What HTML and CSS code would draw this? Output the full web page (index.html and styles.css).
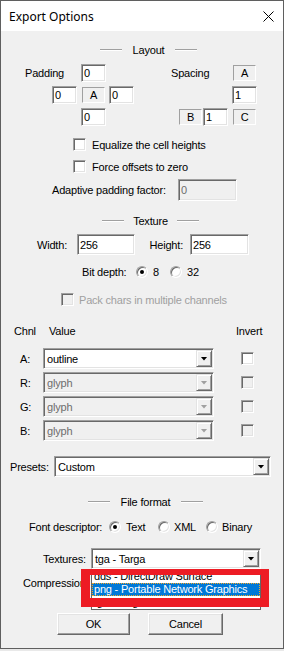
FILE: index.html
```html
<!DOCTYPE html>
<html lang="en">
<head>
    <meta charset="UTF-8">
    <title>Export Options</title>
    <link rel="stylesheet" href="styles.css">
</head>
<body>
    <div class="window">
        <div class="titlebar">
            <span class="title">Export Options</span>
            <svg class="close" width="11" height="11" viewBox="0 0 11 11">
                <path d="M0.5 0.5 L10.5 10.5 M10.5 0.5 L0.5 10.5" stroke="#000" stroke-width="1" fill="none"/>
            </svg>
        </div>
        <div class="client">
            <!-- Layout -->
            <div class="hdr hdr-layout">
                <span class="etch"></span><span class="hdr-text w53">Layout</span><span class="etch"></span>
            </div>
            <div class="layout-grid">
                <div class="pad">
                    <div class="grow"><span class="pad-lbl">Padding</span><span class="edit">0</span></div>
                    <div class="grow pad-r2"><span class="edit">0</span><span class="tag tag-a">A</span><span class="edit">0</span></div>
                    <div class="grow pad-r3"><span class="edit">0</span></div>
                </div>
                <div class="spc">
                    <div class="grow"><span class="spc-lbl">Spacing</span><span class="tag">A</span></div>
                    <div class="grow spc-r2"><span class="edit">1</span></div>
                    <div class="grow spc-r3"><span class="tag">B</span><span class="edit spc-mid">1</span><span class="tag spc-c">C</span></div>
                </div>
            </div>
            <div class="row cb-row cb1"><span class="cb"></span><span class="cb-text">Equalize the cell heights</span></div>
            <div class="row cb-row cb2"><span class="cb"></span><span class="cb-text">Force offsets to zero</span></div>
            <div class="row adaptive"><span class="adapt-lbl">Adaptive padding factor:</span><span class="edit dis adapt-edit">0</span></div>

            <!-- Texture -->
            <div class="hdr hdr-texture">
                <span class="etch"></span><span class="hdr-text w53">Texture</span><span class="etch"></span>
            </div>
            <div class="row wh">
                <span class="wh-lbl w-lbl">Width:</span><span class="edit w-edit">256</span>
                <span class="wh-lbl h-lbl">Height:</span><span class="edit h-edit">256</span>
            </div>
            <div class="row bitdepth">
                <span class="bd-lbl">Bit depth:</span>
                <span class="rb on"></span><span class="rb-text bd8">8</span>
                <span class="rb"></span><span class="rb-text">32</span>
            </div>
            <div class="row pack"><span class="cb dis"></span><span class="pack-text">Pack chars in multiple channels</span></div>

            <div class="row colhdr"><span class="ch-chnl">Chnl</span><span class="ch-value">Value</span><span>Invert</span></div>
            <div class="row chan chan-a">
                <span class="chan-lbl">A:</span>
                <div class="combo chan-combo"><span class="val">outline</span><span class="btn"><span class="arrow"></span></span></div>
                <span class="cb chan-cb"></span>
            </div>
            <div class="row chan">
                <span class="chan-lbl">R:</span>
                <div class="combo chan-combo dis"><span class="val">glyph</span><span class="btn"><span class="arrow"></span></span></div>
                <span class="cb dis chan-cb"></span>
            </div>
            <div class="row chan">
                <span class="chan-lbl">G:</span>
                <div class="combo chan-combo dis"><span class="val">glyph</span><span class="btn"><span class="arrow"></span></span></div>
                <span class="cb dis chan-cb"></span>
            </div>
            <div class="row chan">
                <span class="chan-lbl">B:</span>
                <div class="combo chan-combo dis"><span class="val">glyph</span><span class="btn"><span class="arrow"></span></span></div>
                <span class="cb dis chan-cb"></span>
            </div>
            <div class="row presets">
                <span class="presets-lbl">Presets:</span>
                <div class="combo presets-combo"><span class="val">Custom</span><span class="btn"><span class="arrow"></span></span></div>
            </div>

            <!-- File format -->
            <div class="hdr hdr-file">
                <span class="etch"></span><span class="hdr-text w71">File format</span><span class="etch"></span>
            </div>
            <div class="row fontdesc">
                <span class="fd-lbl">Font descriptor:</span>
                <span class="rb on"></span><span class="rb-text fd-text">Text</span>
                <span class="rb"></span><span class="rb-text fd-xml">XML</span>
                <span class="rb"></span><span class="rb-text fd-bin">Binary</span>
            </div>
            <div class="row textures">
                <span class="tex-lbl">Textures:</span>
                <div class="combo tex-combo"><span class="val">tga - Targa</span><span class="btn"><span class="arrow"></span></span></div>
                <!-- open dropdown list and the red marker drawn over it -->
                <div class="droplist">
                    <div class="item">dds - DirectDraw Surface</div>
                    <div class="item sel">png - Portable Network Graphics</div>
                    <div class="item">tga - Targa</div>
                </div>
                <div class="marker"></div>
            </div>
            <div class="row compression"><span>Compression:</span></div>
            <div class="row buttons">
                <span class="button ok">OK</span>
                <span class="button cancel">Cancel</span>
            </div>
        </div>
    </div>
</body>
</html>
```

FILE: styles.css
```css
body {
    margin: 0;
    background: #e9e9e9;
    font-family: "Liberation Sans", Arial, sans-serif;
    font-size: 11px;
    color: #000;
}
.window {
    width: 284px;
    height: 649px;
    box-sizing: border-box;
    border: 1px solid #5f5f5f;
    display: flex;
    flex-direction: column;
}
.titlebar {
    height: 30px;
    background: #ffffff;
    display: flex;
    align-items: center;
    justify-content: space-between;
    flex-shrink: 0;
}
.title {
    font-family: "Noto Sans", sans-serif;
    font-size: 12px;
    margin-left: 8px;
    margin-top: 1px;
}
.close {
    margin-right: 9px;
}
.client {
    flex: 1;
    background: #f0f0f0;
    position: relative;
    letter-spacing: -0.2px;
}

/* rows */
.row {
    display: flex;
    align-items: center;
}

/* group headers */
.hdr {
    display: flex;
    align-items: center;
    height: 15px;
}
.hdr-layout { margin-top: 11px; margin-left: 99px; }
.hdr-texture { margin-top: 12px; margin-left: 101px; }
.hdr-file { margin-top: 17px; margin-left: 87px; }
.etch {
    width: 22px;
    height: 2px;
    box-sizing: border-box;
    border-top: 1px solid #a0a0a0;
    border-bottom: 1px solid #ffffff;
}
.hdr-text { text-align: center; }
.w53 { width: 53px; }
.w71 { width: 71px; }

/* controls */
.edit {
    box-sizing: border-box;
    width: 25px;
    height: 18px;
    display: flex;
    align-items: center;
    padding-left: 2px;
    background: #ffffff;
    border: 1px solid;
    border-color: #a0a0a0 #ffffff #ffffff #a0a0a0;
    box-shadow: inset 1px 1px #696969, inset -1px -1px #e3e3e3;
}
.edit.dis {
    background: #f0f0f0;
    color: #6d6d6d;
}
.tag {
    box-sizing: border-box;
    width: 23px;
    height: 16px;
    display: flex;
    align-items: center;
    justify-content: center;
    border: 1px solid;
    border-color: #a0a0a0 #ffffff #ffffff #a0a0a0;
}
.cb {
    box-sizing: border-box;
    width: 13px;
    height: 13px;
    flex-shrink: 0;
    background: #ffffff;
    border: 1px solid;
    border-color: #a0a0a0 #ffffff #ffffff #a0a0a0;
    box-shadow: inset 1px 1px #696969, inset -1px -1px #e3e3e3;
}
.cb.dis { background: #f0f0f0; }
.rb {
    box-sizing: border-box;
    width: 12px;
    height: 12px;
    flex-shrink: 0;
    border-radius: 50%;
    background: #ffffff;
    border: 1px solid;
    border-color: #a0a0a0 #ffffff #ffffff #a0a0a0;
    box-shadow: inset 1px 1px #696969, inset -1px -1px #e3e3e3;
    display: flex;
    align-items: center;
    justify-content: center;
}
.rb.on::after {
    content: "";
    width: 4px;
    height: 4px;
    border-radius: 50%;
    background: #000;
}
.rb-text { margin-left: 5px; }

.combo {
    box-sizing: border-box;
    height: 21px;
    padding: 1px;
    display: flex;
    background: #ffffff;
    border: 1px solid;
    border-color: #a0a0a0 #ffffff #ffffff #a0a0a0;
    box-shadow: inset 1px 1px #696969, inset -1px -1px #e3e3e3;
}
.combo .val {
    flex: 1;
    display: flex;
    align-items: center;
    padding-left: 2px;
}
.combo .btn {
    box-sizing: border-box;
    width: 16px;
    display: flex;
    align-items: center;
    justify-content: center;
    background: #f0f0f0;
    border: 1px solid;
    border-color: #e3e3e3 #696969 #696969 #e3e3e3;
    box-shadow: inset 1px 1px #ffffff, inset -1px -1px #a0a0a0;
}
.arrow {
    width: 7px;
    height: 4px;
    background: #000;
    clip-path: polygon(0 0, 100% 0, 50% 100%);
}
.combo.dis { background: #f0f0f0; color: #6d6d6d; }
.combo.dis .arrow { background: #a0a0a0; }

/* layout block */
.layout-grid {
    display: flex;
    margin-top: 7px;
}
.pad, .spc {
    display: flex;
    flex-direction: column;
    gap: 4px;
}
.pad { margin-left: 24px; width: 110px; }
.spc { margin-left: 36px; }
.grow {
    display: flex;
    align-items: center;
    height: 18px;
}
.pad-lbl { width: 56px; }
.pad-r2 { margin-left: 27px; }
.pad-r2 .tag-a { margin: 0 4px 0 5px; }
.pad-r3 { margin-left: 56px; }
.spc-lbl { width: 62px; }
.spc-r2 { margin-left: 61px; }
.spc-r3 { margin-left: 8px; }
.spc-mid { margin-left: 1px; }
.spc-c { margin-left: 5px; }

.cb-row { height: 13px; margin-left: 72px; }
.cb1 { margin-top: 12px; }
.cb2 { margin-top: 9px; }
.cb-text { margin-left: 6px; }

.adaptive { height: 22px; margin-top: 6px; margin-left: 51px; }
.adapt-lbl { width: 126px; }
.adapt-edit { width: 59px; height: 22px; }

/* texture */
.wh { height: 21px; margin-top: 6px; }
.wh-lbl { text-align: right; }
.w-lbl { width: 66px; }
.w-edit { width: 58px; height: 21px; margin-left: 10px; }
.h-lbl { width: 48px; }
.h-edit { width: 59px; height: 21px; margin-left: 7px; }

.bitdepth { height: 14px; margin-top: 10px; margin-left: 81px; }
.bd-lbl { width: 54px; }
.bd8 { width: 17px; }

.pack { height: 13px; margin-top: 14px; margin-left: 60px; }
.pack-text { margin-left: 5px; color: #a0a0a0; }

.colhdr { height: 14px; margin-top: 18px; margin-left: 13px; }
.ch-chnl { width: 35px; }
.ch-value { width: 187px; }

.chan { height: 21px; margin-top: 3px; margin-left: 19px; }
.chan-a { margin-top: 10px; }
.chan-lbl { width: 23px; }
.chan-combo { width: 171px; }
.chan-cb { margin-left: 27px; }

.presets { height: 21px; margin-top: 15px; margin-left: 9px; }
.presets-lbl { width: 44px; }
.presets-combo { width: 217px; }

/* file format */
.fontdesc { height: 14px; margin-top: 11px; margin-left: 28px; }
.fd-lbl { width: 80px; }
.fd-text { width: 32px; }
.fd-xml { width: 32px; margin-left: 4px; }
.fd-bin { margin-left: 4px; }

.textures { height: 21px; margin-top: 14px; position: relative; }
.tex-lbl { width: 48px; margin-left: 42px; }
.tex-combo { width: 170px; }
.droplist {
    position: absolute;
    left: 90px;
    top: 21px;
    width: 170px;
    box-sizing: border-box;
    border: 1px solid #646464;
    background: #ffffff;
    z-index: 2;
}
.droplist .item {
    height: 13px;
    line-height: 13px;
    padding-left: 2px;
    white-space: nowrap;
}
.droplist .item.sel {
    background: #0078d7;
    color: #ffffff;
    outline: 1px dotted #f5a623;
    outline-offset: -1px;
}
.marker {
    position: absolute;
    left: 80px;
    top: 21px;
    width: 188px;
    height: 38px;
    box-sizing: border-box;
    border: solid #ed1c24;
    border-width: 6px 8px 9px 9px;
    z-index: 3;
}

.compression { height: 14px; margin-top: 7px; margin-left: 22px; }

.buttons { height: 22px; margin-top: 23px; margin-left: 56px; gap: 18px; }
.button {
    box-sizing: border-box;
    height: 22px;
    display: flex;
    align-items: center;
    justify-content: center;
    background: #f0f0f0;
    border: 1px solid;
    border-color: #ffffff #696969 #696969 #ffffff;
    box-shadow: inset -1px -1px #a0a0a0, inset 1px 1px #e3e3e3;
}
.ok { width: 73px; }
.cancel { width: 75px; }
```
